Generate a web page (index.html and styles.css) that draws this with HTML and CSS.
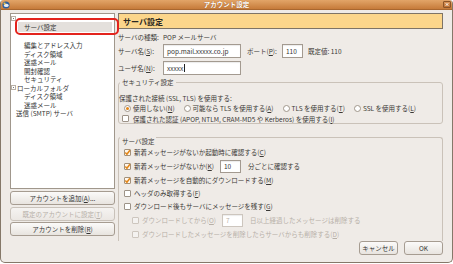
FILE: index.html
```html
<!DOCTYPE html>
<html lang="ja">
<head>
<meta charset="utf-8">
<title>アカウント設定</title>
<link rel="stylesheet" href="styles.css">
</head>
<body>
<div class="window">
  <div class="titlebar">
    <span class="app-icon">
      <svg width="8" height="8" viewBox="0 0 8 8"><circle cx="4" cy="4" r="3.6" fill="#2f5f9e"/><ellipse cx="4.3" cy="4.4" rx="2.4" ry="1.6" fill="#e9eef5"/><circle cx="2.6" cy="2.6" r="1.1" fill="#f3c64b"/></svg>
    </span>
    <span class="title">アカウント設定</span>
    <span class="close">
      <svg width="7" height="7" viewBox="0 0 7 7"><path d="M2 2 L5 5 M5 2 L2 5" stroke="#ffffff" stroke-width="1.1"/></svg>
    </span>
  </div>
  <div class="body">
    <div class="left">
      <div class="tree">
        <div class="t-row t-top"><span class="exp"></span></div>
        <div class="t-row t-sel">サーバ設定</div>
        <div class="t-gap"></div>
        <div class="t-row t-sub">編集とアドレス入力</div>
        <div class="t-row t-sub">ディスク領域</div>
        <div class="t-row t-sub">迷惑メール</div>
        <div class="t-row t-sub">開封確認</div>
        <div class="t-row t-sub">セキュリティ</div>
        <div class="t-row t-folder"><span class="exp"></span>ローカルフォルダ</div>
        <div class="t-row t-sub">ディスク領域</div>
        <div class="t-row t-sub">迷惑メール</div>
        <div class="t-row t-root">送信 (SMTP) サーバ</div>
        <div class="mark"></div>
      </div>
      <div class="btn">アカウントを追加(<u>A</u>)...</div>
      <div class="btn disabled">既定のアカウントに設定(<u>T</u>)</div>
      <div class="btn">アカウントを削除(<u>R</u>)</div>
    </div>
    <div class="right">
      <div class="header">サーバ設定</div>
      <div class="line row-type"><span class="lbl">サーバの種類:</span><span>POP メールサーバ</span></div>
      <div class="line row-form r2">
        <span class="lbl">サーバ名(<u>S</u>):</span>
        <span class="field f-server">pop.mail.xxxxx.co.jp</span>
        <span class="lbl-port">ポート(<u>P</u>):</span>
        <span class="field f-port">110</span>
        <span class="default">既定値: 110</span>
      </div>
      <div class="line row-form r3">
        <span class="lbl">ユーザ名(<u>N</u>):</span>
        <span class="field f-server">xxxxx<span class="caret"></span></span>
      </div>

      <div class="group g-sec">
        <div class="legend">セキュリティ設定</div>
        <div class="line sec-label">保護された接続 (SSL, TLS) を使用する:</div>
        <div class="line radios">
          <span class="opt"><span class="radio on"></span>使用しない(<u>N</u>)</span>
          <span class="opt"><span class="radio"></span>可能なら TLS を使用する(<u>A</u>)</span>
          <span class="opt"><span class="radio"></span>TLS を使用する(<u>T</u>)</span>
          <span class="opt"><span class="radio"></span>SSL を使用する(<u>L</u>)</span>
        </div>
        <div class="line sec-auth"><span class="cb"></span>保護された認証 (APOP, NTLM, CRAM-MD5 や Kerberos) を使用する(<u>I</u>)</div>
      </div>

      <div class="group g-srv">
        <div class="legend">サーバ設定</div>
        <div class="opt-row"><span class="cb on"><svg width="7" height="7" viewBox="0 0 7 7"><path d="M1.3 3.6 L2.9 5.3 L5.9 1.2" fill="none" stroke="#e2861a" stroke-width="1.5"/></svg></span>新着メッセージがないか起動時に確認する(<u>C</u>)</div>
        <div class="opt-row tall"><span class="cb on"><svg width="7" height="7" viewBox="0 0 7 7"><path d="M1.3 3.6 L2.9 5.3 L5.9 1.2" fill="none" stroke="#e2861a" stroke-width="1.5"/></svg></span>新着メッセージがないか(<u>K</u>)<span class="field f-min">10</span><span class="after">分ごとに確認する</span></div>
        <div class="opt-row"><span class="cb on"><svg width="7" height="7" viewBox="0 0 7 7"><path d="M1.3 3.6 L2.9 5.3 L5.9 1.2" fill="none" stroke="#e2861a" stroke-width="1.5"/></svg></span>新着メッセージを自動的にダウンロードする(<u>M</u>)</div>
        <div class="opt-row"><span class="cb"></span>ヘッダのみ取得する(<u>F</u>)</div>
        <div class="opt-row"><span class="cb"></span>ダウンロード後もサーバにメッセージを残す(<u>G</u>)</div>
        <div class="opt-row tall sub disabled"><span class="cb"></span>ダウンロードしてから(<u>O</u>)<span class="field f-day">7</span><span class="after">日以上経過したメッセージは削除する</span></div>
        <div class="opt-row sub disabled"><span class="cb"></span>ダウンロードしたメッセージを削除したらサーバからも削除する(<u>D</u>)</div>
      </div>

      <div class="footer">
        <div class="btn fbtn">キャンセル</div>
        <div class="btn fbtn">OK</div>
      </div>
    </div>
  </div>
</div>
</body>
</html>
```
FILE: styles.css
```css
* { box-sizing: border-box; }
html, body { margin: 0; padding: 0; }
body {
  width: 453px;
  height: 264px;
  overflow: hidden;
  background: #ffffff;
  font-family: "Noto Sans CJK JP", "Noto Sans", sans-serif;
  font-size: 6.5px;
  color: #3a3835;
}
u { text-decoration: underline; text-underline-offset: 1px; }

.window {
  width: 453px;
  height: 263px;
  background: #efebe7;
  border: 1px solid #857869;
  border-top: none;
  border-radius: 4px 4px 5px 5px;
  overflow: hidden;
  display: flex;
  flex-direction: column;
}

.titlebar {
  height: 10px;
  flex: none;
  background: linear-gradient(#e2a568, #c67b3a);
  border-bottom: 1px solid #a9672f;
  display: flex;
  align-items: center;
  justify-content: space-between;
  padding: 0 1px 0 1px;
}
.app-icon { width: 8px; height: 8px; display: flex; }
.title {
  color: #ffffff;
  font-size: 6.5px;
  font-weight: bold;
  line-height: 9px;
  text-shadow: 0 0 1px #8a4d1c;
}
.close {
  width: 8px;
  height: 7px;
  border: 1px solid #8c5428;
  border-radius: 1px;
  background: linear-gradient(#d99356, #bb7033);
  display: flex;
  align-items: center;
  justify-content: center;
}

.body {
  flex: 1;
  display: flex;
  padding: 3px 8px 0 9px;
}

.left {
  width: 105px;
  display: flex;
  flex-direction: column;
}
.tree {
  position: relative;
  height: 176px;
  background: #ffffff;
  border: 1px solid #a0978c;
  margin-bottom: 2px;
  padding-top: 1px;
}
.t-row {
  height: 8.5px;
  line-height: 8.5px;
  white-space: nowrap;
  display: flex;
  align-items: center;
  color: #333;
}
.t-top { height: 7px; padding-left: 0; }
.t-sel {
  height: 10px;
  margin: 0 2px 0 7px;
  padding-left: 6px;
  background: #e4e0dc;
}
.t-gap { height: 9px; }
.t-sub { padding-left: 13px; }
.t-folder { padding-left: 0; }
.t-root { padding-left: 5px; }
.exp {
  width: 5px;
  height: 5px;
  border: 1px solid #b8b0a6;
  margin-right: 1px;
  position: relative;
  background: #fff;
}
.exp::after {
  content: "";
  position: absolute;
  left: 1px;
  top: 1px;
  width: 1px;
  height: 1px;
  border-top: 1px solid #777;
}
.mark {
  position: absolute;
  left: 4px;
  top: 4px;
  width: 104px;
  height: 17px;
  border: 2px solid #e3241d;
  border-radius: 5px;
}

.btn {
  height: 14px;
  border: 1px solid #a69c91;
  border-radius: 3px;
  background: linear-gradient(#fbfaf9, #e8e4df);
  display: flex;
  align-items: center;
  justify-content: center;
  color: #333;
  white-space: nowrap;
  margin-bottom: 1.5px;
}
.btn.disabled {
  color: #b7b0a8;
  border-color: #c9c2ba;
  background: linear-gradient(#f5f3f1, #ebe7e3);
}

.right {
  width: 325px;
  margin-left: 3px;
  display: flex;
  flex-direction: column;
}
.header {
  height: 16px;
  border: 1px solid #7e7466;
  background: #fcd68b;
  padding-left: 4px;
  font-size: 8px;
  font-weight: bold;
  color: #2a2722;
  display: flex;
  align-items: center;
}
.line {
  display: flex;
  align-items: center;
  white-space: nowrap;
}
.row-type { margin-top: 3px; height: 10px; }
.row-form { height: 14px; }
.r2 { margin-top: 2px; }
.r3 { margin-top: 3px; }
.lbl { width: 45px; }
.field {
  height: 14px;
  background: #ffffff;
  border: 1px solid #a39a90;
  box-shadow: inset 0 1px 1px rgba(0,0,0,0.08);
  padding-left: 3px;
  display: flex;
  align-items: center;
  color: #333;
}
.f-server { width: 78px; }
.lbl-port { margin-left: 6px; width: 35px; }
.f-port { width: 21px; }
.default { margin-left: 5px; }
.caret { width: 1px; height: 8px; background: #222; margin-left: 0.5px; }

.group {
  border: 1px solid #cac2b9;
  border-radius: 3px;
}
.legend {
  width: max-content;
  height: 9px;
  line-height: 9px;
  margin: -5px 0 0 1px;
  padding: 0 2px;
  background: #efebe7;
  color: #3a3835;
}
.g-sec { margin-top: 7px; }
.sec-label { margin-top: 6px; height: 10px; }
.radios { height: 10px; padding-left: 5px; gap: 9px; }
.opt { display: flex; align-items: center; }
.radio {
  width: 7px;
  height: 7px;
  border: 1px solid #a0968a;
  border-radius: 50%;
  background: #ffffff;
  margin-right: 2px;
  position: relative;
}
.radio.on::after {
  content: "";
  position: absolute;
  left: 1px;
  top: 1px;
  width: 3px;
  height: 3px;
  border-radius: 50%;
  background: #e2861a;
}
.sec-auth { margin-top: 1px; height: 9px; padding-left: 3px; }
.cb {
  width: 7px;
  height: 7px;
  border: 1px solid #9d9388;
  border-radius: 1px;
  background: #ffffff;
  margin-right: 3px;
  position: relative;
  flex: none;
}
.cb svg { position: absolute; left: -1px; top: -1px; display: block; }
.cb.on { border-color: #a2907a; background: #fff8ee; }
.sec-auth .cb { margin-right: 4px; }

.g-srv {
  margin-top: 13px;
  border-bottom: none;
  border-bottom-left-radius: 0;
  border-bottom-right-radius: 0;
  padding-top: 3.5px;
}
.opt-row {
  height: 13px;
  display: flex;
  align-items: center;
  white-space: nowrap;
  padding-left: 5px;
}
.opt-row.tall { height: 15px; }
.opt-row.sub { padding-left: 13px; }
.opt-row.sub .cb { margin-right: 3px; }
.f-min { width: 21px; height: 13px; margin-left: 6px; }
.f-day { width: 21px; height: 13px; margin-left: 6px; }
.after { margin-left: 7px; }
.disabled { color: #b7b0a8; }
.opt-row.disabled .cb { border-color: #cdc6be; background: #f4f2f0; }
.opt-row.disabled .field { border-color: #cdc6be; color: #b7b0a8; }

.footer {
  margin-top: 0.5px;
  display: flex;
  justify-content: flex-end;
  gap: 6px;
  padding-right: 0;
}
.fbtn { width: 39px; margin-bottom: 0; }
```
